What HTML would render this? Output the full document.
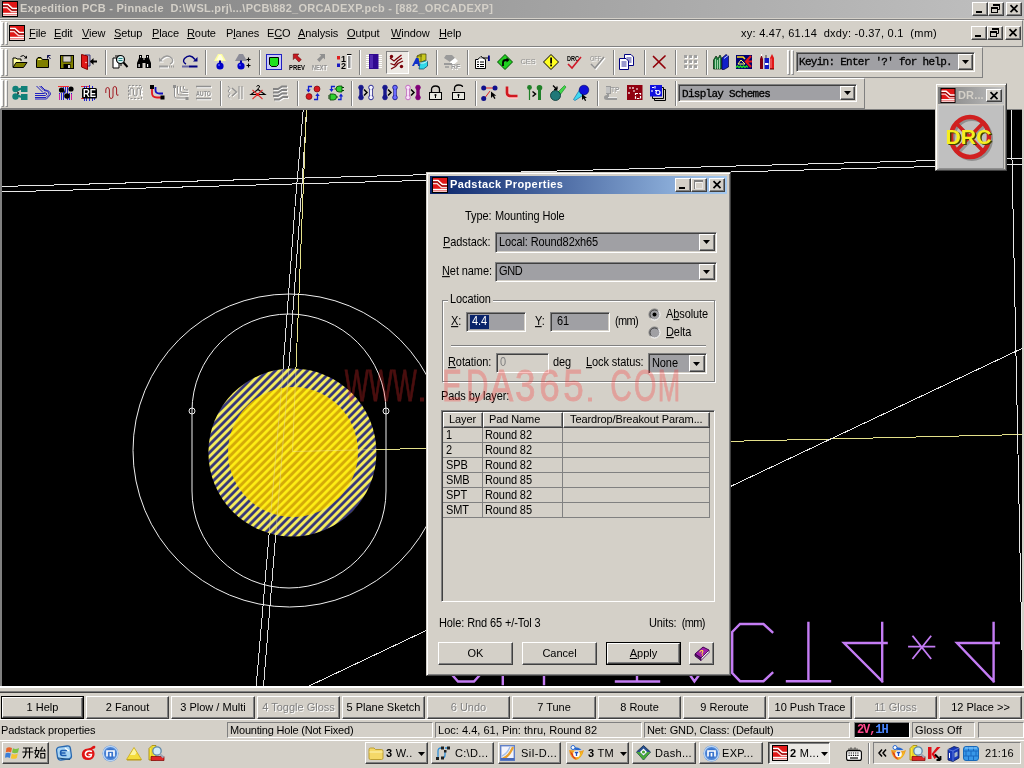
<!DOCTYPE html>
<html><head><meta charset="utf-8"><title>Expedition PCB</title>
<style>
*{box-sizing:border-box;margin:0;padding:0}
html,body{width:1024px;height:768px;overflow:hidden;background:#d4d0c8;font-family:"Liberation Sans",sans-serif;font-size:11px;color:#000}
.abs{position:absolute}
.t{position:absolute;white-space:nowrap;font-size:11px;line-height:13px;letter-spacing:.15px}
.raised{position:absolute;border:1px solid;border-color:#fff #808080 #808080 #fff;background:#d4d0c8}
.btn{position:absolute;background:#d4d0c8;border:1px solid;border-color:#fff #404040 #404040 #fff;box-shadow:inset -1px -1px 0 #808080,inset 1px 1px 0 #d4d0c8}
.sunk{position:absolute;border:1px solid;border-color:#808080 #fff #fff #808080;box-shadow:inset 1px 1px 0 #404040,inset -1px -1px 0 #d4d0c8}
.sunk1{position:absolute;border:1px solid;border-color:#808080 #fff #fff #808080}
.grip{position:absolute;width:3px;border:1px solid;border-color:#fff #909090 #909090 #fff;background:#eceae6}
.sep{position:absolute;width:2px;border-left:1px solid #808080;border-right:1px solid #fff}
.mono{font-family:"Liberation Mono",monospace;font-size:11px;letter-spacing:-.72px;font-weight:normal;-webkit-text-stroke:.3px #000}
u{text-decoration:underline;text-underline-offset:1px}
svg{position:absolute;overflow:visible}
.ic{position:absolute;width:16px;height:16px}
.cap{position:absolute;width:16px;height:14px;background:#d4d0c8;border:1px solid;border-color:#fff #404040 #404040 #fff;box-shadow:inset -1px -1px 0 #808080}
#root{position:absolute;left:0;top:0;width:1024px;height:768px;will-change:transform;transform:translateZ(0)}
</style></head><body><div id="root">
<svg width="0" height="0" style="position:absolute">
<defs>
<symbol id="logo" viewBox="0 0 16 16"><rect width="16" height="16" fill="#000"/><rect x="1" y="1" width="14" height="14" fill="#e01818"/><path d="M1 3.5H6L10.5 7.5H15" stroke="#fff" stroke-width="1.6" fill="none"/><path d="M1 6.5H5L9.5 10.5H15" stroke="#f8d8d8" stroke-width="1.4" fill="none"/><path d="M1 5H5.5L10 9H15" stroke="#7a0000" stroke-width="1" fill="none"/><path d="M1 12.5H15" stroke="#fff" stroke-width="1.4"/><rect x="1" y="13.5" width="14" height="1.5" fill="#f4c8c8"/></symbol>
<symbol id="gmin" viewBox="0 0 16 14"><rect x="4" y="9" width="6" height="2" fill="#000"/></symbol>
<symbol id="gres" viewBox="0 0 16 14"><path d="M5.5 2.5h6v5h-2" stroke="#000" fill="none"/><path d="M5 2.5h7" stroke="#000" stroke-width="2" transform="translate(0,.5)"/><rect x="3.5" y="5.5" width="6" height="5" stroke="#000" fill="none"/><path d="M3 6h7" stroke="#000" stroke-width="2"/></symbol>
<symbol id="gmax" viewBox="0 0 16 14"><rect x="3.5" y="2.5" width="8" height="8" stroke="#808080" fill="none"/><path d="M3 3h9" stroke="#808080" stroke-width="2"/><rect x="4.5" y="4.5" width="7" height="6" stroke="#fff" fill="none" opacity=".8"/></symbol>
<symbol id="gx" viewBox="0 0 16 14"><path d="M4.5 3.2l7 7M11.5 3.2l-7 7" stroke="#000" stroke-width="1.7"/></symbol>
<symbol id="darr" viewBox="0 0 7 4"><path d="M0 0h7L3.5 4z" fill="#000"/></symbol>
</defs></svg>

<!-- main title bar -->
<div class="abs" style="left:0;top:0;width:1024px;height:18px;background:linear-gradient(90deg,#808080,#c0c0c0)"></div>
<svg style="left:2px;top:1px" width="16" height="16"><use href="#logo"/></svg>
<div class="t" id="ttl" style="left:20px;top:2px;font-weight:bold;color:#d4d0c8;letter-spacing:.25px">Expedition PCB - Pinnacle&nbsp; D:\WSL.prj\...\PCB\882_ORCADEXP.pcb - [882_ORCADEXP]</div>
<div class="cap" style="left:972px;top:2px"><svg width="16" height="14" style="left:-1px;top:-1px"><use href="#gmin"/></svg></div>
<div class="cap" style="left:988px;top:2px"><svg width="16" height="14" style="left:-1px;top:-1px"><use href="#gres"/></svg></div>
<div class="cap" style="left:1006px;top:2px"><svg width="16" height="14" style="left:-1px;top:-1px"><use href="#gx"/></svg></div>
<div class="abs" style="left:0;top:19px;width:1024px;height:1px;background:#808080"></div>

<!-- menu bar -->
<div class="raised" style="left:0;top:20px;width:1023px;height:27px"></div>
<div class="grip" style="left:1px;top:22px;height:23px"></div>
<div class="grip" style="left:5px;top:22px;height:23px"></div>
<svg style="left:9px;top:25px" width="16" height="16"><use href="#logo"/></svg>
<div class="t" style="left:29px;top:27px;letter-spacing:-.1px"><u>F</u>ile</div>
<div class="t" style="left:54px;top:27px;letter-spacing:-.1px"><u>E</u>dit</div>
<div class="t" style="left:82px;top:27px;letter-spacing:-.1px"><u>V</u>iew</div>
<div class="t" style="left:114px;top:27px;letter-spacing:-.1px"><u>S</u>etup</div>
<div class="t" style="left:152px;top:27px;letter-spacing:-.1px"><u>P</u>lace</div>
<div class="t" style="left:187px;top:27px;letter-spacing:-.1px"><u>R</u>oute</div>
<div class="t" style="left:226px;top:27px;letter-spacing:-.1px">P<u>l</u>anes</div>
<div class="t" style="left:267px;top:27px;letter-spacing:-.1px">E<u>C</u>O</div>
<div class="t" style="left:298px;top:27px;letter-spacing:-.1px"><u>A</u>nalysis</div>
<div class="t" style="left:347px;top:27px;letter-spacing:-.1px"><u>O</u>utput</div>
<div class="t" style="left:391px;top:27px;letter-spacing:-.1px"><u>W</u>indow</div>
<div class="t" style="left:439px;top:27px;letter-spacing:-.1px"><u>H</u>elp</div>
<div class="t" id="xy" style="left:741px;top:27px;letter-spacing:.26px">xy: 4.47, 61.14&nbsp; dxdy: -0.37, 0.1&nbsp; (mm)</div>
<div class="cap" style="left:971px;top:26px"><svg width="16" height="14" style="left:-1px;top:-1px"><use href="#gmin"/></svg></div>
<div class="cap" style="left:987px;top:26px"><svg width="16" height="14" style="left:-1px;top:-1px"><use href="#gres"/></svg></div>
<div class="cap" style="left:1005px;top:26px"><svg width="16" height="14" style="left:-1px;top:-1px"><use href="#gx"/></svg></div>

<!-- toolbar 1 -->
<div class="raised" style="left:0;top:47px;width:983px;height:31px"></div>
<div class="grip" style="left:1px;top:49px;height:27px"></div>
<div class="grip" style="left:5px;top:49px;height:27px"></div>
<!-- toolbar 2 -->
<div class="raised" style="left:0;top:78px;width:865px;height:31px"></div>
<div class="grip" style="left:1px;top:80px;height:27px"></div>
<div class="grip" style="left:5px;top:80px;height:27px"></div>

<!-- keyin combo -->
<div class="grip" style="left:787px;top:50px;height:25px"></div>
<div class="grip" style="left:791px;top:50px;height:25px"></div>
<div class="sunk" style="left:796px;top:52px;width:179px;height:20px;background:#a0a0a4"></div>
<div class="t mono" style="left:799px;top:56px">Keyin: Enter '?' for help.</div>
<div class="btn" style="left:958px;top:54px;width:15px;height:16px"><svg width="7" height="4" style="left:3px;top:5px"><use href="#darr"/></svg></div>
<!-- display schemes combo -->
<div class="sunk" style="left:678px;top:84px;width:179px;height:18px;background:#a0a0a4"></div>
<div class="t mono" style="left:682px;top:88px">Display Schemes</div>
<div class="btn" style="left:840px;top:86px;width:15px;height:14px"><svg width="7" height="4" style="left:3px;top:4px"><use href="#darr"/></svg></div>
<!-- toolbar icons -->
<div class="abs" style="left:386px;top:51px;width:23px;height:23px;border:1px solid;border-color:#808080 #fff #fff #808080;background:#ece9e4"></div>
<svg style="left:12px;top:54px" width="16" height="16" viewBox="0 0 16 16"><path d="M1 13V4H4L5 5H9V7" fill="#ffffa0" stroke="#000"/><path d="M1 13.5L4 8.5H15L11.5 13.5Z" fill="#808000" stroke="#000" stroke-linejoin="round"/><path d="M8.5 2.5Q11.5 0 14 3.5" stroke="#000" fill="none"/><path d="M15 1.5V4.5H12Z" fill="#000"/></svg>
<svg style="left:36px;top:54px" width="16" height="16" viewBox="0 0 16 16"><path d="M0.5 13.5V5.5L2 3.5H5L6.5 5.5H12.5V13.5Z" fill="#808000" stroke="#000"/><path d="M2 5.5H5.5" stroke="#ffffa0"/><path d="M11.5 1.5L14.5 5M11.5 1.5V4.5M11.5 1.5H14.5" stroke="#101050" fill="none" stroke-width="1"/></svg>
<svg style="left:60px;top:54px" width="16" height="16" viewBox="0 0 16 16"><rect x=".5" y="1.5" width="13" height="13" fill="#808000" stroke="#000"/><rect x="3" y="2" width="8" height="6" fill="#d4d0c8" stroke="#000" stroke-width=".6"/><rect x="3.5" y="10" width="7" height="4.5" fill="#000"/><rect x="8" y="11" width="2" height="3" fill="#d4d0c8"/></svg>
<svg style="left:81px;top:54px" width="16" height="16" viewBox="0 0 16 16"><path d="M4 1H9V12H4Z" fill="#a8a8c0" stroke="#404080"/><path d="M.5 .5L6.5 2V15.5L.5 13Z" fill="#e01818" stroke="#800000"/><circle cx="5" cy="8.5" r=".7" fill="#fff"/><path d="M9.5 7.5H16" stroke="#000" stroke-width="2"/><path d="M9 7.5L12.5 4V11Z" fill="#000"/></svg>
<svg style="left:112px;top:54px" width="16" height="16" viewBox="0 0 16 16"><path d="M1 4H7V14H1Z" fill="#fff" stroke="#000"/><path d="M3 2H9V12" fill="none" stroke="#000"/><circle cx="8.5" cy="5.5" r="4" fill="#d8f0f0" stroke="#000" stroke-width="1.2"/><path d="M6.5 4.5H10.5M6.5 6.5H10.5" stroke="#208080"/><path d="M11.5 8.5L15.5 13" stroke="#000" stroke-width="2"/></svg>
<svg style="left:136px;top:54px" width="16" height="16" viewBox="0 0 16 16"><path d="M3 1H6V4H7.5V6H8.5V4H10V1H13V4L15 9V14H9.5V9H6.5V14H1V9L3 4Z" fill="#000"/><rect x="2.5" y="10" width="1.2" height="3" fill="#fff"/><rect x="11" y="10" width="1.2" height="3" fill="#fff"/><rect x="4" y="2" width="1" height="1.5" fill="#fff"/><rect x="11" y="2" width="1" height="1.5" fill="#fff"/></svg>
<svg style="left:159px;top:54px" width="16" height="16" viewBox="0 0 16 16"><g transform="translate(1,1)"><path d="M2 5.5Q8 -1 13 4.5Q15 8 11 10" stroke="#fff" fill="none" stroke-width="1.3"/><path d="M0 3.5V7.5H4Z" fill="#fff"/><path d="M0 12.5H9" stroke="#fff" stroke-width="2"/></g><path d="M2 5.5Q8 -1 13 4.5Q15 8 11 10" stroke="#9a9a9a" fill="none" stroke-width="1.3"/><path d="M0 3.5V7.5H4Z" fill="#9a9a9a"/><path d="M0 12.5H9" stroke="#9a9a9a" stroke-width="2"/><path d="M10 12.5H16" stroke="#9a9a9a" stroke-width="2" stroke-dasharray="1 1"/></svg>
<svg style="left:182px;top:54px" width="16" height="16" viewBox="0 0 16 16"><path d="M13 5.5Q8 -1 2.5 4.5Q0 8 4 10" stroke="#000080" fill="none" stroke-width="1.4"/><path d="M15.5 3V7.5H11Z" fill="#000080"/><path d="M6.5 12.5H15.5" stroke="#000080" stroke-width="2"/><path d="M.5 12.5H6" stroke="#000080" stroke-width="2" stroke-dasharray="1 1"/></svg>
<svg style="left:212px;top:54px" width="16" height="16" viewBox="0 0 16 16"><path d="M6 0H10L14 7H2Z" fill="#ffffa0"/><path d="M7 1H9L11.5 6H4.5Z" fill="#fff" opacity=".7"/><rect x="7" y="6.5" width="2" height="2.5" fill="#0000a0"/><circle cx="8" cy="12" r="3.6" fill="#0000c8"/><circle cx="7" cy="11" r="1" fill="#5050ff"/></svg>
<svg style="left:235px;top:54px" width="16" height="16" viewBox="0 0 16 16"><path d="M4 0H8L12 7H0Z" fill="#8c8c98"/><rect x="5" y="6.5" width="2" height="2.5" fill="#0000a0"/><circle cx="6" cy="12" r="3.6" fill="#0000c8"/><circle cx="5" cy="11" r="1" fill="#5050ff"/><path d="M11.5 5.5H15.5M13.5 3.5V7.5M11.5 11.5H15.5M13.5 9.5V13.5" stroke="#000" stroke-width="1.1"/></svg>
<svg style="left:266px;top:54px" width="16" height="16" viewBox="0 0 16 16"><rect x=".5" y=".5" width="15" height="15" fill="#c8c8f8" stroke="#2020c0"/><path d="M3.5 3.5H12.5V10.5L10.5 12.5H5.5L3.5 10.5Z" fill="#20e020" stroke="#000"/></svg>
<svg style="left:289px;top:54px" width="16" height="16" viewBox="0 0 16 16"><path d="M1 0H8L5.8 2.2L11 7L8 10L3.2 4.8L1 7Z" fill="#c81820" stroke="#600000" stroke-width=".7" transform="translate(3.5,0) scale(.8)"/><text x="0" y="15.5" font-family="Liberation Sans" font-weight="bold" font-size="6.5" textLength="16" lengthAdjust="spacingAndGlyphs" fill="#000">PREV</text></svg>
<svg style="left:312px;top:54px" width="16" height="16" viewBox="0 0 16 16"><path d="M15 0H8L10.2 2.2L5 7L8 10L12.8 4.8L15 7Z" fill="#909090" transform="translate(1,0) scale(.8)"/><text x="1" y="16.5" font-family="Liberation Sans" font-weight="bold" font-size="6.5" textLength="15" lengthAdjust="spacingAndGlyphs" fill="#fff">NEXT</text><text x="0" y="15.5" font-family="Liberation Sans" font-weight="bold" font-size="6.5" textLength="15" lengthAdjust="spacingAndGlyphs" fill="#909090">NEXT</text></svg>
<svg style="left:336px;top:54px" width="16" height="16" viewBox="0 0 16 16"><rect x="1" y="2" width="3" height="3.5" fill="#e02020"/><rect x="1" y="9.5" width="3" height="3.5" fill="#1818c0"/><text x="5" y="7.5" font-family="Liberation Sans" font-weight="bold" font-size="9" fill="#000">1</text><text x="5" y="15" font-family="Liberation Sans" font-weight="bold" font-size="9" fill="#000">2</text><rect x="11" y="0" width="4.5" height="15" fill="#fff"/><rect x="12" y="2" width="2.5" height="12" fill="#909090"/><path d="M11 .5H15.5" stroke="#000"/></svg>
<svg style="left:366px;top:54px" width="16" height="16" viewBox="0 0 16 16"><path d="M0 1.5H16M0 3.5H16M0 5.5H16M0 7.5H16M0 9.5H16M0 11.5H16M0 13.5H16" stroke="#fff"/><rect x="3" y="0" width="9.5" height="15" fill="#300890"/><rect x="4" y="1" width="3" height="13" fill="#5028b0"/></svg>
<svg style="left:389px;top:54px" width="16" height="16" viewBox="0 0 16 16"><path d="M1 4L5 7L8 4.5L12.5 1M1.5 9.5L5.5 11L8.5 7L13 4M2 15L6.5 12.5L9 9.5L14 7" stroke="#780008" stroke-width="1.3" fill="none"/><circle cx="2.5" cy="2.5" r="1.7" fill="#780008"/><circle cx="12.5" cy="12.5" r="1.7" fill="#780008"/></svg>
<svg style="left:412px;top:54px" width="16" height="16" viewBox="0 0 16 16"><path d="M5 2L9 0H14V6L10 8H5Z" fill="#c8c820" stroke="#404000" stroke-width=".7"/><path d="M9 0V8M5 2H10" stroke="#404000" stroke-width=".6"/><path d="M0 12L4 4H6.5L8 12H6L5.6 10H3L2 12Z" fill="#1030c8"/><path d="M8 9L12 7H15.5V12L11.5 15H7Z" fill="#30d8e8" stroke="#004060" stroke-width=".7"/><path d="M8 9H12L15.5 7" stroke="#fff" stroke-width=".8" fill="none"/></svg>
<svg style="left:443px;top:54px" width="16" height="16" viewBox="0 0 16 16"><path d="M3 1H9L12 4L7 8L1 4Z" fill="#9a9a9a"/><path d="M12 4L15 7L9 12L7 8Z" fill="#fff"/><path d="M1 9H9V11H1Z" fill="#9a9a9a"/><path d="M2 13H6" stroke="#9a9a9a" stroke-width="1.5"/><text x="8.5" y="16" font-family="Liberation Sans" font-weight="bold" font-size="7" fill="#fff">RF</text><text x="8" y="15.3" font-family="Liberation Sans" font-weight="bold" font-size="7" fill="#9a9a9a">RF</text></svg>
<svg style="left:474px;top:54px" width="16" height="16" viewBox="0 0 16 16"><path d="M1.5 5.5H4L7 2.5L11.5 5.5V14.5H1.5Z" fill="#fff" stroke="#000"/><path d="M4 5L7 2.5L10 5" stroke="#000" fill="#c0c0c0" stroke-dasharray="1 1"/><path d="M3 8H5M6 8H10M3 10.5H5M6 10.5H10M3 12.5H5M6 12.5H10" stroke="#000"/><path d="M9 4H15" stroke="#000"/><rect x="14" y="1.5" width="1.8" height="5.5" fill="#000080"/></svg>
<svg style="left:497px;top:54px" width="16" height="16" viewBox="0 0 16 16"><path d="M8 .5L15.5 8L8 15.5L.5 8Z" fill="#20d020" stroke="#005000"/><path d="M6 12V8.5Q6 6 9 6H10" stroke="#000" stroke-width="1.8" fill="none"/><path d="M9.5 3.5L12.5 6L9.5 8.5Z" fill="#000"/></svg>
<svg style="left:520px;top:54px" width="16" height="16" viewBox="0 0 16 16"><text x="1.5" y="11.4" font-family="Liberation Sans" font-size="8" textLength="15" lengthAdjust="spacingAndGlyphs" fill="#fff">CES</text><text x=".5" y="10.4" font-family="Liberation Sans" font-size="8" textLength="15" lengthAdjust="spacingAndGlyphs" fill="#909090">CES</text></svg>
<svg style="left:543px;top:54px" width="16" height="16" viewBox="0 0 16 16"><path d="M8 .5L15.5 8L8 15.5L.5 8Z" fill="#ffff20" stroke="#000"/><rect x="7.2" y="3.5" width="1.8" height="6" fill="#000"/><rect x="7.2" y="10.5" width="1.8" height="1.8" fill="#000"/></svg>
<svg style="left:567px;top:54px" width="16" height="16" viewBox="0 0 16 16"><text x="0" y="6.5" font-family="Liberation Sans" font-weight="bold" font-size="6.5" textLength="12" lengthAdjust="spacingAndGlyphs" fill="#000">DRC</text><path d="M1 10L5 14L14 3" stroke="#d01828" stroke-width="1.6" fill="none"/></svg>
<svg style="left:590px;top:54px" width="16" height="16" viewBox="0 0 16 16"><text x="1" y="7.5" font-family="Liberation Sans" font-size="6.5" textLength="11" lengthAdjust="spacingAndGlyphs" fill="#fff">OFF</text><text x="0" y="6.5" font-family="Liberation Sans" font-size="6.5" textLength="11" lengthAdjust="spacingAndGlyphs" fill="#909090">OFF</text><path d="M2 11L6 15L15 4" stroke="#fff" stroke-width="1.6" fill="none"/><path d="M1 10L5 14L14 3" stroke="#909090" stroke-width="1.6" fill="none"/></svg>
<svg style="left:619px;top:54px" width="16" height="16" viewBox="0 0 16 16"><path d="M5.5 .5H12L14.5 3V11.5H5.5Z" fill="#fff" stroke="#000080"/><path d="M7.5 4H12.5M7.5 6H12.5M7.5 8H12.5" stroke="#000080" stroke-width=".8"/><path d="M.5 4.5H7L9.5 7V15.5H.5Z" fill="#fff" stroke="#000080"/><path d="M2.5 8H7.5M2.5 10H7.5M2.5 12H7.5" stroke="#000080" stroke-width=".8"/></svg>
<svg style="left:652px;top:54px" width="16" height="16" viewBox="0 0 16 16"><path d="M1.5 2.5L13 14M13 2L1.5 13" stroke="#900008" stroke-width="1.7" stroke-linecap="round"/></svg>
<svg style="left:683px;top:54px" width="16" height="16" viewBox="0 0 16 16"><g fill="#fff"><rect x="2" y="2" width="3" height="3"/><rect x="7" y="2" width="3" height="3"/><rect x="12" y="2" width="3" height="3"/><rect x="2" y="7" width="3" height="3"/><rect x="7" y="7" width="3" height="3"/><rect x="12" y="7" width="3" height="3"/><rect x="2" y="12" width="3" height="3"/><rect x="7" y="12" width="3" height="3"/><rect x="12" y="12" width="3" height="3"/></g><g fill="#a0a0a0"><rect x="1" y="1" width="3" height="3"/><rect x="6" y="1" width="3" height="3"/><rect x="11" y="1" width="3" height="3"/><rect x="1" y="6" width="3" height="3"/><rect x="6" y="6" width="3" height="3"/><rect x="11" y="6" width="3" height="3"/><rect x="1" y="11" width="3" height="3"/><rect x="6" y="11" width="3" height="3"/><rect x="11" y="11" width="3" height="3"/></g></svg>
<svg style="left:713px;top:54px" width="16" height="16" viewBox="0 0 16 16"><path d="M.5 6L3 2L5 4.5L7 1L8.5 4V15H.5Z" fill="#208040" stroke="#002000" stroke-width=".7"/><path d="M2.5 5V15M4.5 6V15M6.5 4V15" stroke="#c0e8c0" stroke-width=".8"/><path d="M9 4L13 .5L15.5 2V13L11 15.5H9Z" fill="#1020c8" stroke="#000040" stroke-width=".7"/><path d="M11 4.5L15 1.5" stroke="#fff" stroke-width=".8"/></svg>
<svg style="left:736px;top:54px" width="16" height="16" viewBox="0 0 16 16"><rect x="0" y="1" width="16" height="14" fill="#000070"/><path d="M1 3H7L9 5" stroke="#ffe020" stroke-width="1.5" fill="none"/><path d="M15 2L10 7.5L15 13M10 7.5H16" stroke="#e01818" stroke-width="2.2" fill="none"/><path d="M2 10H9L5 6Z" fill="none" stroke="#ffff60"/><path d="M0 13.5L1.5 12L3 13.5L4.5 12L6 13.5L7.5 12L9 13.5L10.5 12L12 13.5" stroke="#20e020" stroke-width="1.3" fill="none"/></svg>
<svg style="left:759px;top:54px" width="16" height="16" viewBox="0 0 16 16"><path d="M1 5L2.5 1L4 5V15H1Z" fill="#800010"/><path d="M2.5 0V2" stroke="#fff"/><rect x="5.5" y="4" width="4.5" height="11" fill="#1018c0"/><rect x="6" y="9" width="3.5" height="2" fill="#fff"/><path d="M7 1V4" stroke="#404040"/><path d="M11 4L13 0L15 4V15H11Z" fill="#e01818"/><path d="M12 4.5V14" stroke="#ffa0a0" stroke-width=".8"/><path d="M11 15H15" stroke="#600000"/></svg>
<svg style="left:12px;top:85px" width="16" height="16" viewBox="0 0 16 16"><circle cx="3.5" cy="4" r="3.2" fill="#108078"/><circle cx="3.5" cy="11.5" r="3.2" fill="#108078"/><rect x="9" y="1" width="6.5" height="6" fill="#108078"/><rect x="9" y="9" width="6.5" height="6" fill="#108078"/><path d="M5 5.5L9 3.5M5 10L9 12" stroke="#108078" stroke-width="2"/><path d="M5 7L7 8L5 9" stroke="#000" fill="none" stroke-width=".8"/></svg>
<svg style="left:35px;top:85px" width="16" height="16" viewBox="0 0 16 16"><path d="M1.5 1L8 7.5M4.5 1L9 5.5Q14 6 14 9.5L11 12.5H0M0 10.5H10.5L12 9Q11.5 7.8 9 7.8M0 8.5H9.5" stroke="#2020c0" stroke-width="1" fill="none"/><path d="M6 1L10 5Q15.5 5.5 15.5 9.5L11.5 14H0" stroke="#2020c0" fill="none"/></svg>
<svg style="left:58px;top:85px" width="16" height="16" viewBox="0 0 16 16"><path d="M0 1.5H11" stroke="#f03030" stroke-width="1"/><path d="M1.5 8V15M3.5 8V15M5.5 2V15M7.5 2V7L5.5 9M9.5 2V15M11.5 8V15M13.5 8V15" stroke="#2020d0" stroke-width="1"/><path d="M1.5 9V15M13.5 9V15" stroke="#d020a0"/><circle cx="3.5" cy="5" r="2.6" fill="#000"/><circle cx="13" cy="4" r="2.6" fill="#000"/><circle cx="9" cy="11" r="2.8" fill="#000"/></svg>
<svg style="left:81px;top:85px" width="16" height="16" viewBox="0 0 16 16"><path d="M0 1.5H8" stroke="#f03030"/><path d="M0 13.5H4" stroke="#f03030"/><path d="M3.5 1V16M5.5 1V16M8.5 0V16M11.5 1V16M13.5 3V15" stroke="#2020d0"/><rect x="1" y="3" width="15" height="10.5" rx="1.5" fill="#000"/><text x="2" y="12" font-family="Liberation Sans" font-weight="bold" font-size="10.5" textLength="13" lengthAdjust="spacingAndGlyphs" fill="#fff">RE</text></svg>
<svg style="left:105px;top:85px" width="16" height="16" viewBox="0 0 16 16"><path d="M.8 8V5Q.8 2.5 2.6 2.5Q4.4 2.5 4.4 5V11Q4.4 13.5 6.2 13.5Q8 13.5 8 11V4Q8 1.5 9.8 1.5Q11.6 1.5 11.6 4V9Q11.6 11 13.5 10" stroke="#a01820" stroke-width="1" fill="none"/></svg>
<svg style="left:128px;top:85px" width="16" height="16" viewBox="0 0 16 16"><rect x="1.5" y="1.5" width="13" height="13" fill="none" stroke="#fff" stroke-dasharray="2 1.5"/><rect x=".5" y=".5" width="13" height="13" fill="none" stroke="#909090" stroke-dasharray="2 1.5"/><path d="M2 10V5Q2 3 3.8 3Q5.5 3 5.5 5V9Q5.5 11 7.2 11Q9 11 9 9V5Q9 3 10.7 3Q12.5 3 12.5 5V10" stroke="#fff" stroke-width="1" fill="none" transform="translate(1,1)"/><path d="M2 10V5Q2 3 3.8 3Q5.5 3 5.5 5V9Q5.5 11 7.2 11Q9 11 9 9V5Q9 3 10.7 3Q12.5 3 12.5 5V10" stroke="#909090" stroke-width="1" fill="none"/></svg>
<svg style="left:150px;top:85px" width="16" height="16" viewBox="0 0 16 16"><path d="M2 3V8Q2 12.5 7 12.5H12" stroke="#e01820" stroke-width="1.8" fill="none"/><path d="M5.5 2V5Q5.5 8.5 9.5 8.5H13" stroke="#1010c0" stroke-width="1.8" fill="none"/><rect x="0" y="0" width="4" height="4" fill="#000"/><rect x="10.5" y="10.5" width="4" height="4" fill="#000"/></svg>
<svg style="left:173px;top:85px" width="16" height="16" viewBox="0 0 16 16"><g fill="none" stroke="#fff" transform="translate(1,1)"><path d="M1.5 1V11Q1.5 13 3.5 13H13"/><path d="M4.5 1V8Q4.5 10 6.5 10H15"/><path d="M7.5 1V5.5Q7.5 7.5 9.5 7.5H15"/><path d="M10.5 1V3Q10.5 5 12.5 5H15"/></g><g fill="none" stroke="#909090"><path d="M1.5 1V11Q1.5 13 3.5 13H13"/><path d="M4.5 1V8Q4.5 10 6.5 10H15"/><path d="M7.5 1V5.5Q7.5 7.5 9.5 7.5H15"/><path d="M10.5 1V3Q10.5 5 12.5 5H15"/></g><rect x="0" y="0" width="3" height="3" fill="#909090"/><rect x="12.5" y="12" width="3" height="3" fill="#909090"/></svg>
<svg style="left:196px;top:85px" width="16" height="16" viewBox="0 0 16 16"><path d="M1 2.5H16M1 14.5H16" stroke="#fff" stroke-width="1.5"/><path d="M0 1.5H15M0 13.5H15" stroke="#909090" stroke-width="1.5"/><text x="1" y="12" font-family="Liberation Sans" font-weight="bold" font-size="7.5" textLength="15" lengthAdjust="spacingAndGlyphs" fill="#fff">AUTO</text><text x="0" y="11" font-family="Liberation Sans" font-weight="bold" font-size="7.5" textLength="15" lengthAdjust="spacingAndGlyphs" fill="#909090">AUTO</text></svg>
<svg style="left:227px;top:85px" width="16" height="16" viewBox="0 0 16 16"><g transform="translate(1,1)" stroke="#fff" fill="none"><path d="M1 1L3 3.5L1 6L3 8.5L1 11L3 13.5"/><path d="M5 3L9.5 7L5 11"/><path d="M12 1V14M15 1V14"/></g><g stroke="#909090" fill="none"><path d="M1 1L3 3.5L1 6L3 8.5L1 11L3 13.5"/><path d="M5 3L9.5 7L5 11" stroke-width="1.3"/><path d="M12 1V14M15 1V14"/></g></svg>
<svg style="left:250px;top:85px" width="16" height="16" viewBox="0 0 16 16"><path d="M8 4.5V3.5Q10 2.5 9.5 1Q8 -.5 6.5 1.5" stroke="#000" fill="none"/><path d="M8 4.5L15 9.5H1Z" stroke="#000" fill="none" stroke-width="1.1"/><path d="M2.5 5L12.5 14M12.5 5L2.5 14" stroke="#e03030" stroke-width="1.1"/><circle cx="7.5" cy="9.5" r="1.6" fill="#e02020"/></svg>
<svg style="left:273px;top:85px" width="16" height="16" viewBox="0 0 16 16"><g transform="translate(1,1)" stroke="#fff" stroke-width="1.5" fill="none"><path d="M0 4H5L9 1.5H14M0 7.5H5L9 5H14M0 11H5L9 8.5H14M1 14.5H6L10 12H15"/></g><g stroke="#848484" stroke-width="1.8" fill="none"><path d="M0 4H5L9 1.5H14M0 7.5H5L9 5H14M0 11H5L9 8.5H14M1 14.5H6L10 12H15"/></g></svg>
<svg style="left:305px;top:85px" width="16" height="16" viewBox="0 0 16 16"><circle cx="12" cy="4" r="3" fill="#d81820" stroke="#600000" stroke-width=".6"/><circle cx="4" cy="11.5" r="3" fill="#d81820" stroke="#600000" stroke-width=".6"/><path d="M7 1.5H3.5V6" stroke="#1020d0" stroke-width="1.3" fill="none"/><path d="M1.3 4.5H5.7L3.5 7.5Z" fill="#1020d0"/><path d="M9 14.5H12.5V10" stroke="#1020d0" stroke-width="1.3" fill="none"/><path d="M10.3 11H14.7L12.5 8Z" fill="#1020d0"/></svg>
<svg style="left:328px;top:85px" width="16" height="16" viewBox="0 0 16 16"><path d="M14 1H11Q8 1 8 4Q8 7 11 7H14Z" fill="#30d030" stroke="#004000" stroke-width=".8"/><path d="M14 2.5H16M14 5.5H16M6.5 4H8" stroke="#004000"/><path d="M2 9H5.5Q8.5 9 8.5 12Q8.5 15 5.5 15H2Z" fill="#30d030" stroke="#004000" stroke-width=".8"/><path d="M0 11H2M0 13H2M8.5 12H10" stroke="#004000"/><path d="M7 1.5H3.5V5" stroke="#1020d0" stroke-width="1.3" fill="none"/><path d="M1.3 4H5.7L3.5 7Z" fill="#1020d0"/><path d="M10 14.5H13V10.5" stroke="#1020d0" stroke-width="1.3" fill="none"/><path d="M10.8 11.5H15.2L13 8.5Z" fill="#1020d0"/></svg>
<svg style="left:358px;top:85px" width="16" height="16" viewBox="0 0 16 16"><path d="M1.8 3.5V11.5M4.2 3.5V11.5" stroke="#18188c" stroke-width="1"/><rect x="2" y="3" width="2" height="9" fill="#18188c"/><circle cx="3" cy="2.5" r="2.3" fill="#18188c" stroke="#18188c" stroke-width=".9"/><circle cx="3" cy="12.5" r="2.3" fill="#18188c" stroke="#18188c" stroke-width=".9"/><rect x="2.2" y="3" width="1.6" height="9" fill="#18188c"/><path d="M6 4.5L9 7.5L6 10.5" stroke="#000" stroke-width="1.5" fill="none"/><path d="M11.8 3.5V11.5M14.2 3.5V11.5" stroke="#18188c" stroke-width="1"/><rect x="12" y="3" width="2" height="9" fill="#f4f4ff"/><circle cx="13" cy="2.5" r="2.3" fill="#f4f4ff" stroke="#18188c" stroke-width=".9"/><circle cx="13" cy="12.5" r="2.3" fill="#f4f4ff" stroke="#18188c" stroke-width=".9"/><rect x="12.2" y="3" width="1.6" height="9" fill="#f4f4ff"/></svg>
<svg style="left:382px;top:85px" width="16" height="16" viewBox="0 0 16 16"><path d="M1.8 3.5V11.5M4.2 3.5V11.5" stroke="#18188c" stroke-width="1"/><rect x="2" y="3" width="2" height="9" fill="#18188c"/><circle cx="3" cy="2.5" r="2.3" fill="#18188c" stroke="#18188c" stroke-width=".9"/><circle cx="3" cy="12.5" r="2.3" fill="#18188c" stroke="#18188c" stroke-width=".9"/><rect x="2.2" y="3" width="1.6" height="9" fill="#18188c"/><path d="M6 4.5L9 7.5L6 10.5" stroke="#000" stroke-width="1.5" fill="none"/><path d="M11.8 3.5V11.5M14.2 3.5V11.5" stroke="#18188c" stroke-width="1"/><rect x="12" y="3" width="2" height="9" fill="#6a6aff"/><circle cx="13" cy="2.5" r="2.3" fill="#6a6aff" stroke="#18188c" stroke-width=".9"/><circle cx="13" cy="12.5" r="2.3" fill="#6a6aff" stroke="#18188c" stroke-width=".9"/><rect x="12.2" y="3" width="1.6" height="9" fill="#6a6aff"/></svg>
<svg style="left:405px;top:85px" width="16" height="16" viewBox="0 0 16 16"><path d="M1.8 3.5V11.5M4.2 3.5V11.5" stroke="#c060c0" stroke-width="1"/><rect x="2" y="3" width="2" height="9" fill="#f8e0f8"/><circle cx="3" cy="2.5" r="2.3" fill="#f8e0f8" stroke="#c060c0" stroke-width=".9"/><circle cx="3" cy="12.5" r="2.3" fill="#f8e0f8" stroke="#c060c0" stroke-width=".9"/><rect x="2.2" y="3" width="1.6" height="9" fill="#f8e0f8"/><path d="M6 4.5L9 7.5L6 10.5" stroke="#000" stroke-width="1.5" fill="none"/><path d="M11.8 3.5V11.5M14.2 3.5V11.5" stroke="#800078" stroke-width="1"/><rect x="12" y="3" width="2" height="9" fill="#800078"/><circle cx="13" cy="2.5" r="2.3" fill="#800078" stroke="#800078" stroke-width=".9"/><circle cx="13" cy="12.5" r="2.3" fill="#800078" stroke="#800078" stroke-width=".9"/><rect x="12.2" y="3" width="1.6" height="9" fill="#800078"/></svg>
<svg style="left:428px;top:85px" width="16" height="16" viewBox="0 0 16 16"><path d="M3.5 7V4.5Q3.5 1 7.5 1Q11.5 1 11.5 4.5V7" stroke="#000" stroke-width="1.3" fill="none"/><rect x="1.5" y="7.5" width="12" height="7" fill="#e8e8e0" stroke="#000" stroke-width="1"/><circle cx="7.5" cy="10" r="1.1" fill="#000"/><rect x="7" y="10" width="1" height="3" fill="#000"/></svg>
<svg style="left:451px;top:85px" width="16" height="16" viewBox="0 0 16 16"><path d="M3.5 7V4.5Q3.5 1 7.5 1Q11.5 1 11.5 3" stroke="#000" stroke-width="1.3" fill="none" transform="translate(0,-1)"/><rect x="1.5" y="7.5" width="12" height="7" fill="#e8e8e0" stroke="#000" stroke-width="1"/><circle cx="7.5" cy="10" r="1.1" fill="#000"/><rect x="7" y="10" width="1" height="3" fill="#000"/></svg>
<svg style="left:481px;top:85px" width="16" height="16" viewBox="0 0 16 16"><path d="M3 3H14M9 6L3 14" stroke="#e02020" stroke-width="1"/><circle cx="2.7" cy="3" r="2.5" fill="#10108c"/><circle cx="14" cy="3" r="2.5" fill="#10108c"/><circle cx="2.7" cy="13.5" r="2.5" fill="#10108c"/><path d="M10 6.5V13L11.8 11.2L13.3 14L14.5 13.3L13 10.7H15.3Z" fill="#000"/></svg>
<svg style="left:504px;top:85px" width="16" height="16" viewBox="0 0 16 16"><path d="M3 2V8Q3 11.5 7 11.5H13" stroke="#ffc8c8" stroke-width="3.5" fill="none" transform="translate(.7,.7)"/><path d="M3 1.5V8Q3 11 7 11H13.5" stroke="#d01820" stroke-width="2.6" fill="none"/></svg>
<svg style="left:527px;top:85px" width="16" height="16" viewBox="0 0 16 16"><path d="M2.5 3V15" stroke="#208028" stroke-width="1.2"/><circle cx="2.5" cy="2.5" r="2.4" fill="#208028"/><path d="M12.5 3V15" stroke="#208028" stroke-width="3"/><circle cx="12.5" cy="2.8" r="2.8" fill="#208028"/><path d="M5.5 6.5L8.5 9L5.5 11.5" stroke="#000" stroke-width="1.5" fill="none"/></svg>
<svg style="left:550px;top:85px" width="16" height="16" viewBox="0 0 16 16"><path d="M7 8L14.5 .5L16 2L10 10Z" fill="#40d848" stroke="#108020" stroke-width=".6"/><circle cx="5.5" cy="10.5" r="5" fill="#207878" stroke="#003030" stroke-width=".8"/><path d="M3 .5L7 4.5M7 4.5V1.5M7 4.5H4" stroke="#000" stroke-width="1.3" fill="none"/></svg>
<svg style="left:573px;top:85px" width="16" height="16" viewBox="0 0 16 16"><path d="M7 4L.5 14.5L2 15.5L12 9Z" fill="#40d8f0" stroke="#0060a0" stroke-width=".6"/><circle cx="11" cy="5" r="4.8" fill="#1010d8" stroke="#000060" stroke-width=".6"/><path d="M9 9V15L10.7 13.4L12 16L13.2 15.4L11.9 12.9H14Z" fill="#000"/></svg>
<svg style="left:604px;top:85px" width="16" height="16" viewBox="0 0 16 16"><path d="M2 1H7V9H5V12H13V15H3Q0 15 0 12.5Q0 10 3 10V9H2Z" fill="#9a9a9a"/><path d="M3 2V8M5 2V8" stroke="#fff" stroke-width=".8"/><text x="7.5" y="8" font-family="Liberation Sans" font-weight="bold" font-size="8" textLength="8.5" lengthAdjust="spacingAndGlyphs" fill="#fff">TP</text><text x="7" y="7.3" font-family="Liberation Sans" font-weight="bold" font-size="8" textLength="8.5" lengthAdjust="spacingAndGlyphs" fill="#9a9a9a">TP</text><path d="M4 12.5H13" stroke="#fff" stroke-width=".8"/></svg>
<svg style="left:627px;top:85px" width="16" height="16" viewBox="0 0 16 16"><rect x="0" y="0" width="15.5" height="15" fill="#900010"/><path d="M2 3H4M6 2V4M6 6H8M2 7V9M9 4H11" stroke="#fff" stroke-width="1.2"/><rect x="8.5" y="8.5" width="5" height="5" fill="none" stroke="#fff" stroke-width="1.2" stroke-dasharray="2.5 1.2"/></svg>
<svg style="left:650px;top:85px" width="16" height="16" viewBox="0 0 16 16"><path d="M4.5 4.5H15.5V15.5H4.5Z" fill="#d4d0c8" stroke="#000"/><path d="M2.5 2.5H13.5V13.5H2.5Z" fill="#d4d0c8" stroke="#000"/><rect x="0" y="0" width="12" height="11.5" fill="#1010e0"/><path d="M2 2.5H4M5 1V3.5M2 5V7M5 5.5H7" stroke="#fff" stroke-width="1.1"/><circle cx="8" cy="7.5" r="2" fill="none" stroke="#fff" stroke-width="1.2"/></svg>
<div class="sep" style="left:105px;top:50px;height:25px"></div>
<div class="sep" style="left:205px;top:50px;height:25px"></div>
<div class="sep" style="left:259px;top:50px;height:25px"></div>
<div class="sep" style="left:359px;top:50px;height:25px"></div>
<div class="sep" style="left:436px;top:50px;height:25px"></div>
<div class="sep" style="left:467px;top:50px;height:25px"></div>
<div class="sep" style="left:613px;top:50px;height:25px"></div>
<div class="sep" style="left:644px;top:50px;height:25px"></div>
<div class="sep" style="left:675px;top:50px;height:25px"></div>
<div class="sep" style="left:706px;top:50px;height:25px"></div>
<div class="sep" style="left:220px;top:81px;height:25px"></div>
<div class="sep" style="left:297px;top:81px;height:25px"></div>
<div class="sep" style="left:351px;top:81px;height:25px"></div>
<div class="sep" style="left:475px;top:81px;height:25px"></div>
<div class="sep" style="left:597px;top:81px;height:25px"></div>
<div class="sep" style="left:675px;top:81px;height:25px"></div>
<!-- canvas -->
<div class="abs" style="left:0;top:109px;width:1024px;height:578px;background:#808080"></div>
<div class="abs" style="left:1022px;top:109px;width:2px;height:578px;background:#d4d0c8"></div>
<svg id="cv" style="left:0;top:0" width="1024" height="768" viewBox="0 0 1024 768">
<defs>
<clipPath id="cvclip"><rect x="2" y="110" width="1020" height="576"/></clipPath>
<pattern id="h1" width="5.657" height="5.657" patternUnits="userSpaceOnUse" patternTransform="rotate(-45 0 0)"><rect width="5.657" height="5.657" fill="#36367a"/><rect width="5.657" height="2.9" fill="#f4ec5c"/></pattern>
<pattern id="h2" width="5.657" height="5.657" patternUnits="userSpaceOnUse" patternTransform="rotate(-45 0 0)"><rect width="5.657" height="5.657" fill="#d4ac08"/><rect width="5.657" height="2.7" fill="#ffee14"/></pattern>
<clipPath id="padclip"><circle cx="292.4" cy="452.5" r="84"/></clipPath>
</defs>
<g clip-path="url(#cvclip)" fill="none" stroke="#e8e8e8" stroke-width="1">
<rect x="2" y="110" width="1020" height="576" fill="#000" stroke="none"/>
<g shape-rendering="crispEdges">
<path d="M0 186.5L1024 158"/>
<path d="M0 192L1024 164"/>
<path d="M303.2 110L295.5 200L282.2 380L266.9 560L256.2 686" stroke="#dcdcdc"/>
<path d="M306.8 110L300.9 200L288 380L273.7 560L263.5 686" stroke="#dcdcdc"/>
<path d="M306.3 110L302.8 200L295.5 380L292.5 451.5L1024 434.5" stroke="#e4e08a"/>
<path d="M1011 110L1022 650"/>
<path d="M309 686L1024 347.5"/>
</g>
<circle cx="292.4" cy="452.5" r="84" fill="url(#h1)" stroke="none"/>
<circle cx="293" cy="452" r="65" fill="url(#h2)" stroke="none"/>
<g clip-path="url(#padclip)" opacity=".45" stroke="#e8e0b0">
<path d="M303.2 110L295.5 200L282.2 380L266.9 560L256.2 686" stroke="#e0d8b0"/>
<path d="M306.8 110L300.9 200L288 380L273.7 560L263.5 686" stroke="#e0d8b0"/>
<path d="M306.3 110L302.8 200L295.5 380L292.5 451.5L1024 434.5" stroke="#f0e8a0"/>
</g>
<g stroke="#f0f0f0"><circle cx="289.5" cy="450.5" r="156.5"/>
<path d="M192 411A97 97 0 0 1 386 411V491A97 97 0 0 1 192 491Z"/>
<circle cx="192" cy="411" r="3"/><circle cx="386" cy="411" r="3"/></g>
<g stroke="#c47cf4" stroke-width="2.4" stroke-linecap="square">
<path d="M772.3 632L763.5 624H740L732.2 632V673L740 681.2H763.5L772.3 673"/>
<path d="M808.4 623V681.2M787 681.2H830"/>
<path d="M882.2 623V681.2M886.6 643H844L882.2 681.2"/>
<path d="M909 646.6H934.4M913 636.4L930.6 658.3M930.6 636.4L913 658.3" stroke-width="1.8"/>
<path d="M993.6 623V681.2M998.8 643H957L993.6 681.2"/>
<path d="M449.7 672L458 681.5H474L482.5 672M502.8 670V684M544 670V684M637 668V681.5M616 681.5H659M691 676.5L694.4 681.5L698 676.5"/>
</g>
</g></svg>
<div class="abs" style="left:0;top:686px;width:1024px;height:2px;background:#fff"></div>
<div class="abs" style="left:0;top:688px;width:1024px;height:8px;background:#d4d0c8"></div>
<div class="abs" style="left:0;top:691px;width:1024px;height:2px;background:#404040;border-top:1px solid #808080"></div>
<!-- dialog -->
<style>
#dlg .d{position:absolute;white-space:nowrap;font-size:11px;line-height:13px;letter-spacing:-.1px;transform:scaleY(1.1);transform-origin:0 78%}
#dlg .fld{position:absolute;background:#a0a0a4;border:1px solid;border-color:#808080 #fff #fff #808080;box-shadow:inset 1px 1px 0 #404040,inset -1px -1px 0 #d4d0c8}
#dlg .pb{position:absolute;background:#d4d0c8;border:1px solid;border-color:#fff #404040 #404040 #fff;box-shadow:inset -1px -1px 0 #808080;text-align:center;font-size:11px;line-height:20px}
#dlg .hd{position:absolute;top:0;height:16px;background:#d4d0c8;border:1px solid;border-color:#fff #404040 #404040 #fff;box-shadow:inset -1px -1px 0 #808080;font-size:11px;line-height:12px;white-space:nowrap;overflow:hidden;letter-spacing:-.1px}
#dlg .row{position:absolute;left:0;width:266px;height:15px;border-bottom:1px solid #808080;font-size:11px;line-height:14px}
#dlg .row span{position:absolute;top:0;transform:scaleY(1.1);transform-origin:0 78%;letter-spacing:-.1px}
</style>
<div id="dlg" class="abs" style="left:426px;top:172px;width:305px;height:504px;background:#d4d0c8;border:1px solid;border-color:#d4d0c8 #404040 #404040 #d4d0c8;box-shadow:inset 1px 1px 0 #fff,inset -1px -1px 0 #808080">
<!-- coordinates inside are page coords minus (427,173) because of 1px border -->
<div class="abs" style="left:3px;top:3px;width:297px;height:18px;background:linear-gradient(90deg,#0a246a,#a6caf0)"></div>
<svg style="left:5px;top:4px" width="16" height="16"><use href="#logo"/></svg>
<div class="d" style="left:23px;top:5px;font-weight:bold;color:#fff;letter-spacing:.4px;transform:none" id="dttl">Padstack Properties</div>
<div class="cap" style="left:248px;top:5px"><svg width="16" height="14" style="left:-1px;top:-1px"><use href="#gmin"/></svg></div>
<div class="cap" style="left:264px;top:5px"><svg width="16" height="14" style="left:-1px;top:-1px"><use href="#gmax"/></svg></div>
<div class="cap" style="left:282px;top:5px"><svg width="16" height="14" style="left:-1px;top:-1px"><use href="#gx"/></svg></div>

<div class="d" style="left:38px;top:37px">Type:</div>
<div class="d" style="left:68px;top:37px">Mounting Hole</div>
<div class="d" style="left:16px;top:63px"><u>P</u>adstack:</div>
<div class="fld" style="left:68px;top:59px;width:222px;height:21px"></div>
<div class="d" id="lr" style="left:72px;top:63px">Local: Round82xh65</div>
<div class="btn" style="left:272px;top:61px;width:16px;height:17px"><svg width="7" height="4" style="left:3px;top:5px"><use href="#darr"/></svg></div>
<div class="d" style="left:15px;top:92px"><u>N</u>et name:</div>
<div class="fld" style="left:68px;top:89px;width:222px;height:20px"></div>
<div class="d" style="left:72px;top:92px;letter-spacing:-.4px">GND</div>
<div class="btn" style="left:272px;top:91px;width:16px;height:16px"><svg width="7" height="4" style="left:3px;top:5px"><use href="#darr"/></svg></div>

<!-- group box -->
<div class="abs" style="left:15px;top:127px;width:274px;height:83px;border:1px solid;border-color:#808080 #fff #fff #808080;box-shadow:inset 1px 1px 0 #fff,-1px -1px 0 transparent"></div>
<div class="abs" style="left:15px;top:127px;width:273px;height:82px;border:1px solid #808080"></div>
<div class="d" style="left:21px;top:120px;background:#d4d0c8;padding:0 2px">Location</div>
<div class="d" style="left:24px;top:142px"><u>X</u>:</div>
<div class="fld" style="left:39px;top:139px;width:60px;height:20px"></div>
<div class="abs" style="left:43px;top:142px;width:19px;height:14px;background:#0a246a"></div><div class="d" style="left:45px;top:142px;color:#fff">4.4</div>
<div class="d" style="left:108px;top:142px"><u>Y</u>:</div>
<div class="fld" style="left:123px;top:139px;width:60px;height:20px"></div>
<div class="d" style="left:130px;top:142px">61</div>
<div class="d" style="left:188px;top:142px;letter-spacing:-.7px">(mm)</div>
<!-- radios -->
<svg style="left:221px;top:135px" width="13" height="13"><circle cx="6.5" cy="6.5" r="5.5" fill="#a0a0a4"/><path d="M2.6 10.4A5.5 5.5 0 0 1 10.4 2.6" stroke="#808080" fill="none"/><path d="M3.3 9.7A4.5 4.5 0 0 1 9.7 3.3" stroke="#404040" fill="none"/><path d="M10.4 2.6A5.5 5.5 0 0 1 2.6 10.4" stroke="#fff" fill="none"/><circle cx="6.5" cy="6.5" r="2" fill="#000"/></svg>
<div class="d" style="left:239px;top:135px">A<u>b</u>solute</div>
<svg style="left:221px;top:153px" width="13" height="13"><circle cx="6.5" cy="6.5" r="5.5" fill="#a0a0a4"/><path d="M2.6 10.4A5.5 5.5 0 0 1 10.4 2.6" stroke="#808080" fill="none"/><path d="M3.3 9.7A4.5 4.5 0 0 1 9.7 3.3" stroke="#404040" fill="none"/><path d="M10.4 2.6A5.5 5.5 0 0 1 2.6 10.4" stroke="#fff" fill="none"/></svg>
<div class="d" style="left:239px;top:153px"><u>D</u>elta</div>
<div class="abs" style="left:24px;top:172px;width:255px;height:2px;border-top:1px solid #808080;border-bottom:1px solid #fff"></div>
<div class="d" style="left:21px;top:183px"><u>R</u>otation:</div>
<div class="fld" style="left:69px;top:180px;width:53px;height:20px;background:#d4d0c8"></div>
<div class="d" style="left:73px;top:183px;color:#808080">0</div>
<div class="d" style="left:126px;top:183px">deg</div>
<div class="d" style="left:159px;top:183px"><u>L</u>ock status:</div>
<div class="fld" style="left:221px;top:180px;width:59px;height:21px"></div>
<div class="d" style="left:225px;top:184px">None</div>
<div class="btn" style="left:262px;top:182px;width:16px;height:17px"><svg width="7" height="4" style="left:3px;top:6px"><use href="#darr"/></svg></div>

<div class="d" style="left:14px;top:217px">Pads by layer:</div>
<!-- list -->
<div class="abs" style="left:14px;top:237px;width:274px;height:192px;border:1px solid;border-color:#808080 #fff #fff #808080;box-shadow:inset 1px 1px 0 #404040,inset -1px -1px 0 #d4d0c8"></div>
<div class="abs" style="left:16px;top:239px;width:270px;height:188px;overflow:hidden">
 <div class="hd" style="left:0;width:40px;padding-left:5px">Layer</div>
 <div class="hd" style="left:40px;width:80px;padding-left:5px">Pad Name</div>
 <div class="hd" style="left:120px;width:147px;padding-left:6px">Teardrop/Breakout Param...</div>
 <div class="row" style="top:16px"><span style="left:3px">1</span><span style="left:42px">Round 82</span></div>
 <div class="row" style="top:31px"><span style="left:3px">2</span><span style="left:42px">Round 82</span></div>
 <div class="row" style="top:46px"><span style="left:3px">SPB</span><span style="left:42px">Round 82</span></div>
 <div class="row" style="top:61px"><span style="left:3px">SMB</span><span style="left:42px">Round 85</span></div>
 <div class="row" style="top:76px"><span style="left:3px">SPT</span><span style="left:42px">Round 82</span></div>
 <div class="row" style="top:91px"><span style="left:3px">SMT</span><span style="left:42px">Round 85</span></div>
 <div class="abs" style="left:39px;top:16px;width:1px;height:90px;background:#808080"></div>
 <div class="abs" style="left:119px;top:16px;width:1px;height:90px;background:#808080"></div>
 <div class="abs" style="left:266px;top:16px;width:1px;height:90px;background:#808080"></div>
</div>
<div class="d" style="left:12px;top:444px">Hole: Rnd 65 +/-Tol 3</div>
<div class="d" style="left:222px;top:444px">Units:&nbsp;<span style="letter-spacing:-.7px"> (mm)</span></div>
<div class="pb" style="left:11px;top:469px;width:75px;height:23px">OK</div>
<div class="pb" style="left:95px;top:469px;width:75px;height:23px">Cancel</div>
<div class="abs" style="left:179px;top:469px;width:75px;height:23px;border:1px solid #000"></div>
<div class="pb" style="left:180px;top:470px;width:73px;height:21px;line-height:18px"><u>A</u>pply</div>
<div class="pb" style="left:262px;top:469px;width:25px;height:23px"><svg width="18" height="17" style="left:3px;top:2px" viewBox="0 0 18 17"><path d="M2 9L10 2L16 5L8 13Z" fill="#a020a8" stroke="#400050" stroke-width="1"/><path d="M2 9V11L8 15.5V13Z" fill="#601070" stroke="#300040" stroke-width=".8"/><path d="M8 13L16 5V7.5L8 15.5Z" fill="#f0f0f0" stroke="#400050" stroke-width=".8"/><text x="6.5" y="10.5" font-size="8" font-weight="bold" fill="#ffe040" font-family="Liberation Sans" transform="rotate(-20 9 8)">?</text></svg></div>
</div>

<!-- watermark -->
<svg style="left:0;top:0;pointer-events:none" width="1024" height="768" id="wm"><g font-family="Liberation Sans" font-size="44.5" fill="#ff3232" stroke="#ff3232" stroke-width=".9" opacity=".29">
<text x="344.8" y="401.3" textLength="24" lengthAdjust="spacingAndGlyphs">W</text>
<text x="368.8" y="401.3" textLength="24" lengthAdjust="spacingAndGlyphs">W</text>
<text x="392.8" y="401.3" textLength="24" lengthAdjust="spacingAndGlyphs">W</text>
<rect x="420.0" y="397.5" width="4" height="4" stroke="none"/>
<text x="442.3" y="401.3" textLength="19.5" lengthAdjust="spacingAndGlyphs">E</text>
<text x="466.0" y="401.3" textLength="22.5" lengthAdjust="spacingAndGlyphs">D</text>
<text x="489.8" y="401.3" textLength="23.5" lengthAdjust="spacingAndGlyphs">A</text>
<text x="515.0" y="401.3" textLength="20.5" lengthAdjust="spacingAndGlyphs">3</text>
<text x="539.2" y="401.3" textLength="20.5" lengthAdjust="spacingAndGlyphs">6</text>
<text x="563.2" y="401.3" textLength="20.5" lengthAdjust="spacingAndGlyphs">5</text>
<rect x="588.0" y="397.5" width="4" height="4" stroke="none"/>
<text x="610.3" y="401.3" textLength="21.5" lengthAdjust="spacingAndGlyphs">C</text>
<text x="634.0" y="401.3" textLength="22.5" lengthAdjust="spacingAndGlyphs">O</text>
<text x="657.8" y="401.3" textLength="22.5" lengthAdjust="spacingAndGlyphs">M</text>
</g></svg>
<!-- DRC floating window -->
<div class="abs" style="left:935px;top:83px;width:72px;height:88px;background:#d4d0c8;border:1px solid;border-color:#d4d0c8 #404040 #404040 #d4d0c8;box-shadow:inset 1px 1px 0 #fff,inset -1px -1px 0 #808080">
<div class="abs" style="left:2px;top:3px;width:66px;height:17px;background:linear-gradient(90deg,#808080,#c0c0c0)"></div>
<svg style="left:4px;top:4px" width="16" height="15"><use href="#logo"/></svg>
<div class="t" style="left:22px;top:5px;font-weight:bold;color:#d4d0c8">DR...</div>
<div class="cap" style="left:50px;top:5px;height:13px"><svg width="16" height="14" style="left:-1px;top:-1.5px"><use href="#gx"/></svg></div>
<div class="abs" style="left:2px;top:21px;width:66px;height:64px;background:#c0c0c0;border:1px solid;border-color:#c8c8c8 #909090 #909090 #c8c8c8"></div>
<svg style="left:9px;top:28px" width="52" height="50" viewBox="0 0 52 50">
<ellipse cx="27" cy="27" rx="19" ry="20" fill="none" stroke="#707070" stroke-width="4" opacity=".6"/>
<path d="M13 13L40 41M40 13L13 41" stroke="#707070" stroke-width="3.5" opacity=".5"/>
<ellipse cx="25" cy="25" rx="19" ry="20" fill="none" stroke="#d02020" stroke-width="4.5"/>
<path d="M11 11L38 39M38 11L11 39" stroke="#d02020" stroke-width="3.5"/>
<text x="2" y="33" font-family="Liberation Sans" font-weight="bold" font-size="21" fill="#404000" textLength="46" lengthAdjust="spacingAndGlyphs">DRC</text>
<text x="0.5" y="31.5" font-family="Liberation Sans" font-weight="bold" font-size="21" fill="#f6ee20" textLength="46" lengthAdjust="spacingAndGlyphs">DRC</text>
</svg>
</div>
<!-- fkeys -->
<div class="abs" style="left:1px;top:696px;width:83px;height:23px;border:1px solid #000"></div>
<div class="btn" style="left:2px;top:697px;width:81px;height:21px;text-align:center;font-size:11px;line-height:18px">1 Help</div>
<div class="btn" style="left:86px;top:696px;width:83px;height:23px;text-align:center;font-size:11px;line-height:20px;">2 Fanout</div>
<div class="btn" style="left:171px;top:696px;width:84px;height:23px;text-align:center;font-size:11px;line-height:20px;">3 Plow / Multi</div>
<div class="btn" style="left:257px;top:696px;width:83px;height:23px;text-align:center;font-size:11px;line-height:20px;color:#808080;text-shadow:1px 1px 0 #fff;">4 Toggle Gloss</div>
<div class="btn" style="left:342px;top:696px;width:83px;height:23px;text-align:center;font-size:11px;line-height:20px;">5 Plane Sketch</div>
<div class="btn" style="left:427px;top:696px;width:83px;height:23px;text-align:center;font-size:11px;line-height:20px;color:#808080;text-shadow:1px 1px 0 #fff;">6 Undo</div>
<div class="btn" style="left:512px;top:696px;width:84px;height:23px;text-align:center;font-size:11px;line-height:20px;">7 Tune</div>
<div class="btn" style="left:598px;top:696px;width:83px;height:23px;text-align:center;font-size:11px;line-height:20px;">8 Route</div>
<div class="btn" style="left:683px;top:696px;width:83px;height:23px;text-align:center;font-size:11px;line-height:20px;">9 Reroute</div>
<div class="btn" style="left:768px;top:696px;width:84px;height:23px;text-align:center;font-size:11px;line-height:20px;">10 Push Trace</div>
<div class="btn" style="left:854px;top:696px;width:83px;height:23px;text-align:center;font-size:11px;line-height:20px;color:#808080;text-shadow:1px 1px 0 #fff;">11 Gloss</div>
<div class="btn" style="left:939px;top:696px;width:83px;height:23px;text-align:center;font-size:11px;line-height:20px;">12 Place >></div>
<!-- status -->
<div class="abs" style="left:0;top:719px;width:1024px;height:1px;background:#fff"></div>
<div class="t" style="left:1px;top:724px;letter-spacing:-.15px">Padstack properties</div>
<div class="sunk1" style="left:227px;top:722px;width:206px;height:16px;"></div>
<div class="t" style="left:230px;top:724px;letter-spacing:-.2px">Mounting Hole (Not Fixed)</div>
<div class="sunk1" style="left:435px;top:722px;width:207px;height:16px;"></div>
<div class="t" style="left:438px;top:724px;letter-spacing:.02px">Loc: 4.4, 61, Pin: thru, Round 82</div>
<div class="sunk1" style="left:644px;top:722px;width:206px;height:16px;"></div>
<div class="t" style="left:647px;top:724px;letter-spacing:-.12px">Net: GND, Class: (Default)</div>
<div class="sunk1" style="left:854px;top:722px;width:56px;height:16px;background:#000"></div>
<div class="t" style="left:857px;top:724px;font-family:'Liberation Mono',monospace;font-weight:bold;font-size:12px;letter-spacing:-1.1px"><span style="color:#ff4a8c">2V,</span><span style="color:#4a86ff">1H</span></div>
<div class="sunk1" style="left:912px;top:722px;width:63px;height:16px;"></div>
<div class="t" style="left:915px;top:724px">Gloss Off</div>
<div class="sunk1" style="left:978px;top:722px;width:46px;height:16px;"></div>
<!-- taskbar -->
<div class="abs" style="left:0;top:739px;width:1024px;height:29px;background:#d4d0c8;border-top:1px solid #d4d0c8;box-shadow:inset 0 1px 0 #fff"></div>
<div class="btn" style="left:2px;top:742px;width:47px;height:22px"></div>
<svg style="left:5px;top:745px" width="16" height="16" viewBox="0 0 16 16"><path d="M1.5 3Q4 1.5 7 3L6 7.5Q3.5 6 .8 7.3Z" fill="#e8642a"/><path d="M8 3.2Q10.5 4.8 14 3L13 7.5Q10 9 7 7.6Z" fill="#7cc242"/><path d="M.6 8.3Q3.2 7 5.8 8.6L4.8 13Q2.5 11.5 0 12.8Z" fill="#3b7fd8"/><path d="M6.8 8.8Q9.5 10.2 12.8 8.6L11.8 13Q9 14.6 5.8 13.2Z" fill="#f4c431"/></svg>
<svg style="left:22px;top:746px" width="24" height="13" viewBox="0 0 24 13"><g stroke="#000" stroke-width="1.1" fill="none">
<path d="M1 2H10.5M0.3 6H11.3M4 2V6Q4 10 1 12M7.5 2V12.5"/>
<path d="M14.5 1Q14.5 4 13 7.5L16.5 11.5M12.5 4.5H17Q16.8 8.5 13 12M20.5 0.8L18.5 5H23L22 3M18.8 7.5H22.8V12H18.8Z"/></g></svg>
<div class="btn" style="left:365px;top:742px;width:63px;height:22px"></div>
<div class="t" style="left:386px;top:747px;letter-spacing:.3px"><b>3</b> W..</div>
<div class="btn" style="left:431px;top:742px;width:63px;height:22px"></div>
<div class="t" style="left:455px;top:747px;letter-spacing:.3px">C:\D...</div>
<div class="btn" style="left:498px;top:742px;width:63px;height:22px"></div>
<div class="t" style="left:521px;top:747px;letter-spacing:.3px">SiI-D...</div>
<div class="btn" style="left:566px;top:742px;width:63px;height:22px"></div>
<div class="t" style="left:588px;top:747px;letter-spacing:.3px"><b>3</b> TM</div>
<div class="btn" style="left:632px;top:742px;width:64px;height:22px"></div>
<div class="t" style="left:655px;top:747px;letter-spacing:.3px">Dash...</div>
<div class="btn" style="left:699px;top:742px;width:64px;height:22px"></div>
<div class="t" style="left:722px;top:747px;letter-spacing:.3px">EXP...</div>
<div class="abs" style="left:768px;top:742px;width:62px;height:22px;border:1px solid;border-color:#404040 #fff #fff #404040;box-shadow:inset 1px 1px 0 #808080;background:#eae8e4"></div>
<div class="t" style="left:790px;top:747px;letter-spacing:.3px"><b>2</b> M...</div>
<svg style="left:418px;top:752px" width="7" height="4"><use href="#darr"/></svg>
<svg style="left:620px;top:752px" width="7" height="4"><use href="#darr"/></svg>
<svg style="left:821px;top:752px" width="7" height="4"><use href="#darr"/></svg>
<div class="sep" style="left:868px;top:743px;height:21px"></div>
<div class="sunk1" style="left:873px;top:742px;width:148px;height:22px"></div>
<svg style="left:878px;top:749px" width="9" height="8" viewBox="0 0 9 8"><path d="M4 .5L1 4L4 7.5M8 .5L5 4L8 7.5" stroke="#000" stroke-width="1.5" fill="none"/></svg>
<div class="t" style="left:985px;top:747px;letter-spacing:.3px">21:16</div>
<!-- taskbar icons -->
<svg style="left:56px;top:745px" width="16" height="16" viewBox="0 0 16 16"><rect x="1" y="1.5" width="14" height="13" rx="3" fill="#a8d4f4" stroke="#2868b0" stroke-width="1.3" transform="rotate(-8 8 8)"/><path d="M11 5.5H6Q4.5 5.5 4.5 8Q4.5 10.5 6.5 10.5H10.5M5 8H9.5" stroke="#1c5cb0" stroke-width="1.5" fill="none"/><path d="M9 3L13 6" stroke="#fff" stroke-width="1.2"/><path d="M2 13L14 14.5" stroke="#184878" stroke-width="1.2"/></svg>
<svg style="left:81px;top:745px" width="15" height="16" viewBox="0 0 15 16"><path d="M12 1Q14 0 14.5 2Q14 4.5 11 4Q14 6 13.5 10Q12.5 15 7 15Q1 15 .8 9.5Q1 4 7 3.5Q10 3 12 1Z" fill="#e01414"/><path d="M11 6.5Q9 5.5 6.5 6.3Q4 7.5 4.5 10Q5.5 12.5 8.5 12Q10.5 11.5 10.5 9.5H7.5" stroke="#fff" stroke-width="1.5" fill="none"/></svg>
<svg style="left:102px;top:745px" width="17" height="17" viewBox="0 0 17 17"><circle cx="8.5" cy="8.5" r="8" fill="#4f86d6"/><circle cx="8.5" cy="8.5" r="7.2" fill="none" stroke="#b8d4f4" stroke-width="1.3"/><circle cx="8.5" cy="8.5" r="5" fill="#3a74cc"/><path d="M5 11.5V6H12V11.5M8.5 8V11.5" stroke="#fff" stroke-width="1.7" fill="none"/></svg>
<svg style="left:126px;top:747px" width="16" height="14" viewBox="0 0 16 14"><path d="M8 .5L15.5 12.5H.5Z" fill="#f4dc3c" stroke="#c8a818" stroke-width=".8"/><path d="M8 1.5L4 8H9L10.5 5.5Z" fill="#fcf4a0"/><path d="M1 12.5H15.5L15 13.5H1Z" fill="#b89410"/></svg>
<svg style="left:148px;top:745px" width="17" height="16" viewBox="0 0 17 16"><path d="M1 3.5L4 .5H8V15H1Z" fill="#f8e838" stroke="#a08000" stroke-width=".8"/><path d="M4 .5V15" stroke="#d8c020"/><path d="M3 11.5H16V15.5H3Z" fill="#e02828" stroke="#800000" stroke-width=".7"/><circle cx="9" cy="6" r="4.2" fill="#d0ecf8" stroke="#6088a8" stroke-width="1.3"/><path d="M12 9L15.5 12.5" stroke="#a0a8b8" stroke-width="2"/></svg>
<svg style="left:368px;top:746px" width="16" height="15" viewBox="0 0 16 15"><path d="M1 3.5Q1 2 2.5 2H6L7.5 3.5H13.5Q15 3.5 15 5V12Q15 13.5 13.5 13.5H2.5Q1 13.5 1 12Z" fill="#f4d868" stroke="#b89828" stroke-width=".9"/><path d="M1.5 6H14.5" stroke="#fcf0a8" stroke-width="1.2"/></svg>
<svg style="left:436px;top:746px" width="14" height="15" viewBox="0 0 14 15"><path d="M2 12V5Q2 2 5 2H6M9 2H12M9 5V9Q9 12 6 12" stroke="#3090d8" stroke-width="1.3" fill="none"/><rect x="0" y="11" width="3" height="3" fill="#202020"/><rect x="5" y="0.5" width="3" height="3" fill="#202020"/><rect x="11" y=".5" width="3" height="3" fill="#202020"/><rect x="5" y="10.5" width="3" height="3" fill="#202020"/><rect x="8" y="4" width="2.5" height="2.5" fill="#202020"/></svg>
<svg style="left:500px;top:745px" width="15" height="16" viewBox="0 0 15 16"><rect x=".7" y=".7" width="13.6" height="14.6" fill="#f4f4fc" stroke="#6080c8" stroke-width="1.4"/><path d="M2 14Q9 12 13 2" stroke="#e8a030" stroke-width="2.2" fill="none"/><path d="M2 11Q7 9 10 2" stroke="#a8c0e8" stroke-width="1.5" fill="none"/><rect x=".7" y="13" width="13.6" height="2.3" fill="#4868b8"/></svg>
<svg style="left:568px;top:745px" width="17" height="16" viewBox="0 0 17 16"><path d="M1 5Q2 13 8 15Q14 13 16 5Q12 7 8.5 6Q5 5 1 5Z" fill="#f0a020"/><path d="M2 6Q4 13 8 14.5Q6 9 2 6Z" fill="#e03818"/><path d="M14.5 6Q13 12 9 14.5Q12 10 14.5 6Z" fill="#f8d020"/><path d="M4 3Q8 1 13.5 4.5Q10 5.5 6 4.5Z" fill="#2868d0"/><circle cx="5" cy="2.5" r="2" fill="#fff" stroke="#2868d0" stroke-width="1"/><circle cx="8.5" cy="9" r="3.3" fill="#fff"/><path d="M6.8 7.5H10.2M8.5 7.5V11" stroke="#2050c0" stroke-width="1.3"/></svg>
<svg style="left:636px;top:745px" width="15" height="16" viewBox="0 0 15 16"><path d="M7.5 .5L14.5 7L7.5 15L.5 7Z" fill="#285090" stroke="#102848" stroke-width=".8"/><path d="M.5 7L7.5 15L14.5 7L11 7L7.5 11L4 7Z" fill="#48a838"/><path d="M4 7L7.5 3.5L11 7L7.5 10.5Z" fill="#fff"/><circle cx="7.5" cy="7" r="1.6" fill="#48a838"/></svg>
<svg style="left:703px;top:745px" width="17" height="17" viewBox="0 0 17 17"><circle cx="8.5" cy="8.5" r="8" fill="#4f86d6"/><circle cx="8.5" cy="8.5" r="7.2" fill="none" stroke="#b8d4f4" stroke-width="1.3"/><circle cx="8.5" cy="8.5" r="5" fill="#3a74cc"/><path d="M5 11.5V6H12V11.5M8.5 8V11.5" stroke="#fff" stroke-width="1.7" fill="none"/></svg>
<svg style="left:772px;top:745px" width="16" height="16"><use href="#logo"/></svg>
<svg style="left:846px;top:747px" width="16" height="14" viewBox="0 0 16 14"><path d="M3 1.5V3.5M5 .5V3.5M7 1.5V3.5M9 .5V3.5M11 1.5V3.5M13 2.5V3.5" stroke="#000" stroke-width=".9"/><rect x=".6" y="3.6" width="14.8" height="9.8" rx="2" fill="#fff" stroke="#000" stroke-width="1.1"/><path d="M2.5 6H13.5M2.5 8.3H13.5" stroke="#000" stroke-width="1.2" stroke-dasharray="1.2 1"/><path d="M4 11H12" stroke="#000" stroke-width="1.2"/></svg>
<svg style="left:890px;top:745px" width="17" height="16" viewBox="0 0 17 16"><path d="M1 5Q2 13 8 15Q14 13 16 5Q12 7 8.5 6Q5 5 1 5Z" fill="#f0a020"/><path d="M2 6Q4 13 8 14.5Q6 9 2 6Z" fill="#e03818"/><path d="M14.5 6Q13 12 9 14.5Q12 10 14.5 6Z" fill="#f8d020"/><path d="M4 3Q8 1 13.5 4.5Q10 5.5 6 4.5Z" fill="#2868d0"/><circle cx="5" cy="2.5" r="2" fill="#fff" stroke="#2868d0" stroke-width="1"/><circle cx="8.5" cy="9" r="3.3" fill="#fff"/><path d="M6.8 7.5H10.2M8.5 7.5V11" stroke="#2050c0" stroke-width="1.3"/></svg>
<svg style="left:909px;top:745px" width="17" height="16" viewBox="0 0 17 16"><path d="M1 3.5L4 .5H8V15H1Z" fill="#f8e838" stroke="#a08000" stroke-width=".8"/><path d="M4 .5V15" stroke="#d8c020"/><path d="M3 11.5H16V15.5H3Z" fill="#e02828" stroke="#800000" stroke-width=".7"/><circle cx="9" cy="6" r="4.2" fill="#d0ecf8" stroke="#6088a8" stroke-width="1.3"/><path d="M12 9L15.5 12.5" stroke="#a0a8b8" stroke-width="2"/></svg>
<svg style="left:927px;top:746px" width="14" height="15" viewBox="0 0 14 15"><path d="M1 1H4.5V13H1Z" fill="#e01018"/><path d="M4.5 8L10 1H13.5L7 8L10 11L7.5 13Z" fill="#e01018"/><path d="M8 8.5L13.5 14M13.5 14V10M13.5 14H9.5" stroke="#000" stroke-width="1.8" fill="none"/></svg>
<svg style="left:947px;top:746px" width="13" height="16" viewBox="0 0 13 16"><path d="M1 3.5L7 .5L12 2V12L6 15.5L1 14Z" fill="#1838b8" stroke="#081858" stroke-width=".8"/><path d="M1 3.5L6 5L12 2M6 5V15.5" stroke="#6888e8" stroke-width=".8" fill="none"/><path d="M7.5 7L10.5 5.5V10L7.5 11.5Z" fill="#a8b8c8"/><path d="M2.5 7V12" stroke="#fff" stroke-width="1"/></svg>
<svg style="left:963px;top:746px" width="16" height="15" viewBox="0 0 16 15"><rect x=".5" y=".5" width="15" height="14" rx="2.5" fill="#3898e8" stroke="#1868b8"/><path d="M1 5H15M1 10H15M5.5 1V5M10.5 1V5M3 5V10M8 5V10M13 5V10M5.5 10V14M10.5 10V14" stroke="#1868c0" stroke-width="1"/><path d="M2 2H14" stroke="#90d0ff" stroke-width="1"/></svg>
</div></body></html>
